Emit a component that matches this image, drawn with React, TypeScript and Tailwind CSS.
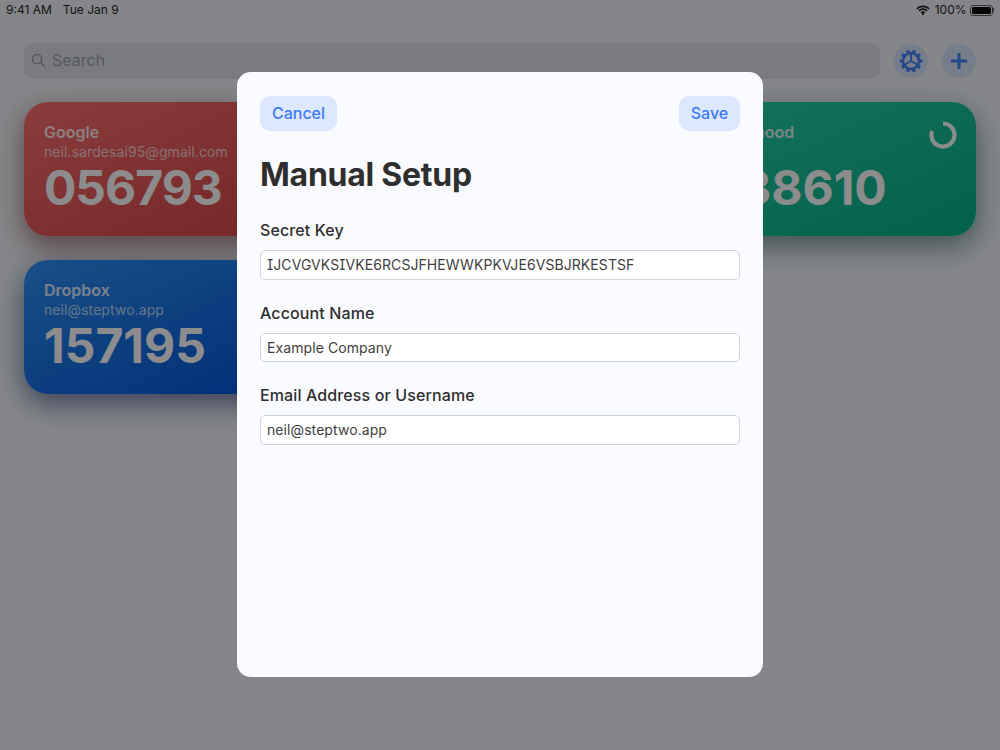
import React from "react";

const font = { fontFamily: "Inter, 'Noto Sans', sans-serif" };

function Card({ className, name, mail, code, ring, codeClass }: { className: string; name: string; mail?: string; code: string; ring?: boolean; codeClass?: string }) {
  return (
    <div className={`relative h-[134px] rounded-[24px] pt-[20px] pl-[20px] text-white ${className}`}>
      <div className="text-[16px] leading-[20px] font-semibold text-white/85">{name}</div>
      <div className="h-[20px] text-[14px] leading-[20px] tracking-[0.08px] whitespace-nowrap text-white/70">{mail}</div>
      <div className={`mt-[2px] text-[48px] leading-[48px] font-bold ${codeClass ?? ""}`}>{code}</div>
      {ring && (
        <svg className="absolute right-[19px] top-[19px]" width="28" height="28" viewBox="0 0 28 28" fill="none">
          <path d="M14 2.500 A11.500 11.500 0 1 1 3.200 10" stroke="#ffffff" strokeWidth="4.200" />
        </svg>
      )}
    </div>
  );
}

function Gear() {
  const teeth = Array.from({ length: 10 }, (_, i) => i * 36);
  return (
    <svg width="24" height="24" viewBox="0 0 24 24" fill="none" stroke="#3f83f8">
      <circle cx="12" cy="12" r="8" strokeWidth="2.400" />
      {teeth.map((a) => (
        <rect key={a} x="10.400" y="0.800" width="3.200" height="4" fill="#3f83f8" stroke="none" transform={`rotate(${a + 18} 12 12)`} />
      ))}
      <path d="M12 12 L12 4 M12 12 L5 16 M12 12 L19 16" strokeWidth="2" />
    </svg>
  );
}

function Field({ label, value, mono }: { label: string; value: string; mono?: boolean }) {
  return (
    <div className="mb-[23px]">
      <div className="mb-[10px] text-[16px] leading-[20px] font-[550] tracking-[0.12px] text-[#2f2f2f]">{label}</div>
      <div
        className={`h-[29.5px] rounded-[5px] border border-[#ccd4e2] bg-white px-[6px] text-[14px] leading-[28px] tracking-[0.08px] text-[#3f3f3f] whitespace-nowrap ${mono ? "[font-feature-settings:'ss02','cv08']" : ""}`}
      >
        {value}
      </div>
    </div>
  );
}

export default function App() {
  return (
    <div className="relative h-[750px] w-[1000px] overflow-hidden bg-[#f2f5fa]" style={font}>
      <div className="h-[20px]" />
      <div className="flex items-center gap-[14px] pl-[24px] pr-[24px] pt-[23px]">
        <div className="flex h-[36px] w-[856px] items-center gap-[6px] rounded-[10px] bg-[#dde1e7] pb-[2px] pl-[7px] text-[16px] text-[#9ca1a9]">
          <svg width="15" height="15" viewBox="0 0 16 16" fill="none" stroke="#9297a0" strokeWidth="1.400">
            <circle cx="6.500" cy="6.500" r="5" />
            <path d="M10.200 10.200 L15 15" />
          </svg>
          <span>Search</span>
        </div>
        <div className="flex h-[34px] w-[34px] items-center justify-center rounded-full bg-[#d8e4fb]">
          <Gear />
        </div>
        <div className="flex h-[34px] w-[34px] items-center justify-center rounded-full bg-[#d8e4fb]">
          <svg width="20" height="20" viewBox="0 0 20 20" stroke="#3f83f8" strokeWidth="3">
            <path d="M10 2 V18 M2 10 H18" />
          </svg>
        </div>
      </div>
      <div className="mt-[23px] grid grid-cols-[301px_301px_301px] gap-x-[24.5px] gap-y-[24px] px-[24px]">
        <Card className="bg-gradient-to-br from-[#fb6d6d] to-[#d34545] shadow-[0_10px_28px_rgba(90,20,20,0.55)]" name="Google" mail="neil.sardesai95@gmail.com" code="056793" codeClass="tracking-[-1px]" />
        <div />
        <Card className="bg-gradient-to-br from-[#25cfa8] to-[#05b088] shadow-[0_10px_28px_rgba(10,70,60,0.55)] !pl-[8px]" name="Neighborhood" code="238610" codeClass="ml-[27px]" ring />
        <Card className="bg-gradient-to-br from-[#2f8ff5] to-[#0050d8] shadow-[0_10px_28px_rgba(10,40,100,0.6)]" name="Dropbox" mail="neil@steptwo.app" code="157195" />
      </div>

      <div className="absolute inset-0 bg-black/45" />

      <div className="absolute left-0 right-0 top-0 flex h-[20px] items-center justify-between pl-[6px] pr-[6px] text-[12px] text-[#111]">
        <div className="flex gap-[11px]">
          <span>9:41 AM</span>
          <span>Tue Jan 9</span>
        </div>
        <div className="flex items-center">
          <svg width="14" height="11" viewBox="0 0 14 11" fill="#111">
            <path d="M7 2.200c2.100 0 4 .8 5.400 2.200L13.600 3.200C11.800 1.400 9.500.4 7 .4S2.200 1.400.4 3.200l1.200 1.200C3 3 4.900 2.200 7 2.200z" />
            <path d="M7 5.100c1.300 0 2.400.5 3.300 1.300l1.200-1.200C10.300 4 8.700 3.300 7 3.300S3.700 4 2.500 5.200l1.200 1.200C4.600 5.600 5.700 5.100 7 5.100z" />
            <path d="M7 6.200c-.9 0-1.700.3-2.300.9L7 10.400l2.300-3.300c-.6-.6-1.400-.9-2.300-.9z" />
          </svg>
          <span className="ml-[5px] mr-[3px]">100%</span>
          <div className="flex items-center">
            <div className="h-[11px] w-[23px] rounded-[3px] border border-[#333] p-[1px]">
              <div className="h-full w-full rounded-[1.5px] bg-[#050505]" />
            </div>
            <div className="h-[4px] w-[1.5px] rounded-r-sm bg-[#333]" />
          </div>
        </div>
      </div>

      <div className="absolute left-[236.5px] top-[72px] h-[605px] w-[526.5px] rounded-[14px] bg-[#fafbfe] pl-[23.5px] pr-[23px] pt-[24px]">
        <div className="flex items-center justify-between">
          <div className="flex h-[35px] w-[77px] items-center justify-center rounded-[10px] bg-[#dde7fd] pb-[1px] text-[16px] font-[550] text-[#3b7bf6]">Cancel</div>
          <div className="flex h-[35px] w-[61px] items-center justify-center rounded-[10px] bg-[#dde7fd] pb-[1px] text-[16px] font-[550] text-[#3b7bf6]">Save</div>
        </div>
        <h1 className="mt-[22px] mb-[23px] text-[32px] leading-[44px] font-bold tracking-[-0.25px] text-[#2e2e2e]">Manual Setup</h1>
        <Field label="Secret Key" value="IJCVGVKSIVKE6RCSJFHEWWKPKVJE6VSBJRKESTSF" mono />
        <Field label="Account Name" value="Example Company" />
        <Field label="Email Address or Username" value="neil@steptwo.app" />
      </div>
    </div>
  );
}
